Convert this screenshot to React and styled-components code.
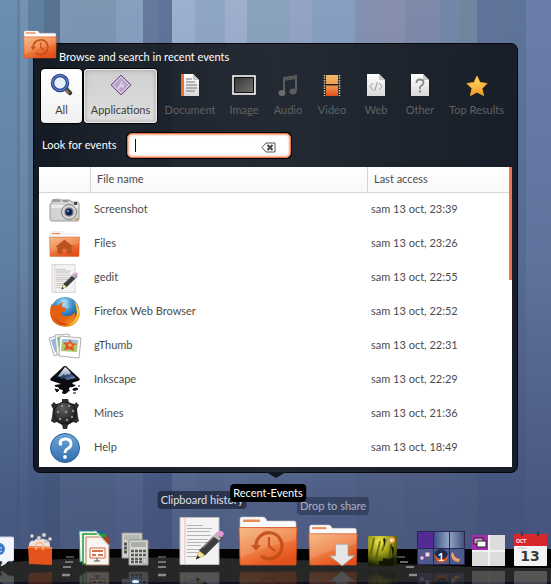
import * as React from "react";
import styled, { createGlobalStyle, ThemeProvider } from "styled-components";

const theme = {
  font: '"Lato", "Open Sans", sans-serif',
  textSize: "11px",
  colors: {
    accent: "#ee7646",
    text: "#4c4c4c",
    rule: "#d6d6d6",
    muted: "#5f6265",
    panelEdge: "#05070b",
  },
};

const stripes = [
  [0, 17, "#6a8fb0"],
  [17, 20, "#6481a2"],
  [20, 28, "#7592b2"],
  [28, 44, "#5f80a0"],
  [44, 60, "#577390"],
  [60, 74, "#7f97b6"],
  [74, 116, "#7d96b2"],
  [116, 143, "#899fc0"],
  [143, 158, "#68799e"],
  [158, 172, "#60739a"],
  [172, 195, "#9bb1cf"],
  [195, 225, "#90a7c4"],
  [225, 247, "#9eb0ce"],
  [247, 290, "#8ca3be"],
  [290, 312, "#93a4c4"],
  [312, 355, "#879fc0"],
  [355, 380, "#8292b0"],
  [380, 405, "#8790ac"],
  [405, 440, "#7d8aaa"],
  [440, 460, "#7288a8"],
  [460, 477, "#71869f"],
  [477, 500, "#62749c"],
  [500, 526, "#5f7499"],
  [526, 551, "#6a7ea9"],
];

const wallpaper = stripes
  .map(([from, to, color]) => {
    const stop = (x) => `${((x / 551) * 100).toFixed(2)}%`;
    return `${color} ${stop(from)}, ${color} ${stop(to)}`;
  })
  .join(", ");

const GlobalStyle = createGlobalStyle`
  * {
    box-sizing: border-box;
  }

  body {
    margin: 0;
    overflow-x: hidden;
    font-family: ${theme.font};
    font-size: ${theme.textSize};
    line-height: 16px;
    color: ${theme.colors.text};
  }

  button,
  input {
    font: inherit;
  }
`;

const Desktop = styled.main`
  display: flex;
  flex-direction: column;
  min-height: 100vh;
  overflow: hidden;
  background:
    linear-gradient(
      to bottom,
      rgba(62, 77, 118, 0) 0%,
      rgba(64, 80, 120, 0.25) 45%,
      rgba(62, 76, 118, 0.78) 85%,
      rgba(62, 76, 116, 0.85) 100%
    ),
    linear-gradient(to right, ${wallpaper});
`;

const Panel = styled.section`
  position: relative;
  margin: 43px 33px 0;
  padding: 5px 5px 5px;
  border: 1px solid ${(props) => props.theme.colors.panelEdge};
  border-radius: 7px;
  background: linear-gradient(
    to right,
    rgba(16, 21, 29, 0.94) 0%,
    rgba(24, 29, 36, 0.93) 25%,
    rgba(30, 36, 44, 0.95) 50%,
    rgba(20, 26, 35, 0.95) 100%
  );

  &::after {
    content: "";
    position: absolute;
    top: 100%;
    left: 50%;
    margin-left: -10px;
    border: 10px solid transparent;
    border-top: 6px solid #10141e;
    border-bottom: 0;
  }
`;

const PanelBadge = styled.div`
  position: absolute;
  top: -14px;
  left: -11px;
  line-height: 0;
`;

const PanelTitle = styled.h1`
  margin: 0 0 3px;
  padding-left: 20px;
  font-size: inherit;
  font-weight: 400;
  line-height: 16px;
  color: #fff;
`;

const Tabs = styled.nav`
  display: flex;
  align-items: stretch;
  height: 56px;
  margin-left: 1px;
`;

const tabLook = {
  plain: `
    background: none;
    color: ${theme.colors.muted};
  `,
  active: `
    background: linear-gradient(#ffffff, #f1f1f1);
    color: #3c3c3c;
    box-shadow: 0 0 0 1px #000;
  `,
  pressed: `
    background: linear-gradient(#cfcfcf, #dedede);
    color: #3c3c3c;
    box-shadow: 0 0 0 1px #000, inset 0 0 0 1px #ededed, inset 0 0 5px #8a8a8a;
  `,
};

const Tab = styled.button`
  display: flex;
  flex: 0 0 ${(props) => props.$width}px;
  flex-direction: column;
  align-items: center;
  gap: 5px;
  margin: 1px;
  padding: 4px 0 0;
  border: 0;
  border-radius: 4px;
  white-space: nowrap;
  cursor: pointer;
  ${(props) => tabLook[props.$look]}
`;

const SearchRow = styled.form`
  display: flex;
  align-items: center;
  gap: 10px;
  margin: 9px 0 9px 3px;
  color: #fff;
`;

const SearchLabel = styled.label`
  flex: 0 0 75px;
  padding-bottom: 2px;
  white-space: nowrap;
`;

const SearchBox = styled.div`
  display: flex;
  align-items: center;
  width: 164px;
  height: 25px;
  padding: 0 14px 0 7px;
  border: 1px solid ${(props) => props.theme.colors.accent};
  border-radius: 5px;
  background: #fff;
  box-shadow: 0 0 0 1px #000, inset 0 0 2px 1px #f3a583;
`;

const SearchInput = styled.input`
  flex: 1;
  min-width: 0;
  padding: 0;
  border: 0;
  outline: 0;
  background: none;
  color: #222;
`;

const Caret = styled.i`
  width: 1px;
  height: 13px;
  background: #111;
`;

const ClearButton = styled.button`
  padding: 3px 0 0;
  border: 0;
  background: none;
  line-height: 0;
  cursor: pointer;
`;

const ListBox = styled.div`
  display: flex;
  align-items: flex-start;
  min-height: 300px;
  background: #fff;
`;

const EventTable = styled.table`
  flex: 1;
  border-collapse: separate;
  border-spacing: 0;
  table-layout: fixed;
  width: 100%;
`;

const HeadCell = styled.th`
  width: ${(props) => props.$width};
  height: 26px;
  padding: 0 0 1px 6px;
  border-bottom: 1px solid ${(props) => props.theme.colors.rule};
  border-left: ${(props) =>
    props.$divided ? `1px solid ${props.theme.colors.rule}` : "0"};
  background: linear-gradient(#fff, #f8f8f8);
  font-weight: 400;
  text-align: left;
`;

const Cell = styled.td`
  height: 34px;
  padding: 0 0 2px 4px;
`;

const IconCell = styled(Cell)`
  padding: 0;
  text-align: center;
  line-height: 0;
`;

const ScrollThumb = styled.div`
  flex: 0 0 3px;
  height: 113px;
  background: ${(props) => props.theme.colors.accent};
`;

const Dock = styled.footer`
  position: relative;
  display: flex;
  align-items: flex-end;
  justify-content: center;
  height: 100px;
  margin-top: auto;
  padding-right: 21px;
`;

const DockFloor = styled.svg`
  position: absolute;
  left: 0;
  bottom: 0;
  width: 100%;
  height: 35px;
`;

const DockSlot = styled.div`
  position: relative;
  display: flex;
  flex: 0 0 ${(props) => props.$width}px;
  flex-direction: column;
  align-items: center;
  min-width: 0;
  line-height: 0;
`;

const DockDivider = styled(DockSlot)`
  padding-bottom: 7px;
`;

const DockButton = styled.button`
  flex: none;
  padding: 0;
  border: 0;
  background: none;
  line-height: 0;
`;

const Reflection = styled.div`
  height: 18px;
  padding-top: 5px;
  overflow: hidden;
  opacity: 0.22;

  svg {
    transform: scaleY(-1);
  }
`;

const RunningLight = styled.div`
  position: absolute;
  bottom: 1px;
  width: 7px;
  height: 3px;
  border-radius: 50%;
  background: #e8f4ff;
  box-shadow: 0 0 4px 1px #3f77b8;
`;

const DockLabel = styled.span`
  position: absolute;
  bottom: ${(props) => props.$bottom}px;
  left: 50%;
  z-index: ${(props) => (props.$strong ? 2 : 1)};
  padding: 1px 3px;
  border-radius: 4px;
  background: ${(props) => (props.$strong ? "#000" : "rgba(22, 27, 45, 0.8)")};
  line-height: 16px;
  white-space: nowrap;
  color: #fff;
  opacity: ${(props) => props.$opacity};
  transform: translateX(-50%);
`;

const Icon = ({ w, h, box, children }) => (
  <svg width={w} height={h} viewBox={box || `0 0 ${w} ${h}`} aria-hidden="true">
    {children}
  </svg>
);

const HiddenSvg = styled.svg`
  position: absolute;
`;

const SharedPaint = () => (
  <HiddenSvg width="0" height="0" aria-hidden="true">
    <defs>
      <linearGradient id="orange" x1="0" y1="0" x2="0.6" y2="1">
        <stop offset="0" stopColor="#f6b27a" />
        <stop offset="0.45" stopColor="#f08a4c" />
        <stop offset="1" stopColor="#e5501a" />
      </linearGradient>
      <linearGradient id="paper" x1="0" y1="0" x2="0" y2="1">
        <stop offset="0" stopColor="#ffffff" />
        <stop offset="1" stopColor="#d9d9d9" />
      </linearGradient>
      <linearGradient id="film" x1="0" y1="0" x2="0" y2="1">
        <stop offset="0" stopColor="#f0b968" />
        <stop offset="0.5" stopColor="#f09a50" />
        <stop offset="1" stopColor="#e2501a" />
      </linearGradient>
      <linearGradient id="dark" x1="0" y1="0" x2="1" y2="1">
        <stop offset="0" stopColor="#323232" />
        <stop offset="1" stopColor="#767676" />
      </linearGradient>
      <linearGradient id="gold" x1="0" y1="0" x2="0" y2="1">
        <stop offset="0" stopColor="#ffe27a" />
        <stop offset="1" stopColor="#f79a1c" />
      </linearGradient>
      <linearGradient id="help" x1="0" y1="0" x2="0" y2="1">
        <stop offset="0" stopColor="#6fa6d8" />
        <stop offset="1" stopColor="#2f6fae" />
      </linearGradient>
      <linearGradient id="ink" x1="0" y1="0" x2="1" y2="1">
        <stop offset="0.3" stopColor="#0a0c12" />
        <stop offset="0.65" stopColor="#35507e" />
        <stop offset="1" stopColor="#8fa9d0" />
      </linearGradient>
      <linearGradient id="inkTip" x1="0" y1="0" x2="0" y2="1">
        <stop offset="0" stopColor="#f4f7fb" />
        <stop offset="1" stopColor="#7f93b4" />
      </linearGradient>
      <linearGradient id="fox" x1="0" y1="0" x2="1" y2="1">
        <stop offset="0" stopColor="#e35d12" />
        <stop offset="0.6" stopColor="#e4620f" />
        <stop offset="1" stopColor="#fbc02e" />
      </linearGradient>
      <linearGradient id="wall" x1="0" y1="0" x2="1" y2="0">
        <stop offset="0" stopColor="#3c5184" />
        <stop offset="0.5" stopColor="#93a6c6" />
        <stop offset="1" stopColor="#43507f" />
      </linearGradient>
      <radialGradient id="globe" cx="0.45" cy="0.2" r="0.8">
        <stop offset="0" stopColor="#9bd6f6" />
        <stop offset="0.5" stopColor="#2f7fc0" />
        <stop offset="1" stopColor="#123a78" />
      </radialGradient>
      <radialGradient id="iron" cx="0.4" cy="0.3" r="0.7">
        <stop offset="0" stopColor="#5d605c" />
        <stop offset="1" stopColor="#1b1d1b" />
      </radialGradient>
      <radialGradient id="forest" cx="0.4" cy="0.2" r="0.8">
        <stop offset="0" stopColor="#f3ec4e" />
        <stop offset="0.5" stopColor="#9a9a18" />
        <stop offset="1" stopColor="#1c2206" />
      </radialGradient>
    </defs>
  </HiddenSvg>
);

const Folder = ({ w, h, emblem }) => (
  <Icon w={w} h={h} box="0 0 60 50">
    <path d="M2 14V3q0-2 2-2h21q2 0 3 2l1 2h27q2 0 2 2v8z" fill="#fbfbfb" stroke="#c9c4bf" strokeWidth="0.6" />
    <path d="M5 3.500h17v2.500H5z" fill="#ef8a58" />
    <path d="M1 11.500h58L58 48q0 1-1 1H3q-1 0-1-1z" fill="url(#orange)" stroke="#d2501f" strokeWidth="0.8" />
    <path d="M2 12.500h56L57.500 24Q28 30 2.500 42z" fill="#fff" opacity="0.13" />
    {emblem === "clock" && (
      <g fill="none" stroke="#bf4a14" strokeWidth="3.200" opacity="0.85">
        <path d="M18 30A13 13 0 1 1 23 40" />
        <path d="M31 21v9l6 5" strokeWidth="2.200" />
        <path d="M13 29h10l-5 6z" fill="#bf4a14" stroke="none" />
      </g>
    )}
    {emblem === "home" && (
      <path d="M30 17l18 14h-4v13H34V34h-8v10H16V31h-4z" fill="#b9521f" />
    )}
    {emblem === "drop" && (
      <path d="M33 24h15v14h8L41 50 26 38h7z" fill="#e6e6e6" stroke="#a5a5a5" />
    )}
  </Icon>
);

const Notepad = ({ w, h }) => (
  <Icon w={w} h={h} box="0 0 46 49">
    <path d="M1 1h39v47H1z" fill="#f3f3f3" stroke="#bdbdbd" />
    <path d="M6 1v47" stroke="#f1b9b9" />
    <path d="M8 9h16M8 12h25M8 15h23M8 19h24M8 23h21M8 26h23M8 29h14M8 33h17M8 36h12M8 40h14" stroke="#b4b4b4" strokeWidth="1.200" />
    <path d="M17 43l3-9 18-18 6 5-18 18z" fill="#3d3d3d" />
    <path d="M24 31L37 18" stroke="#808080" strokeWidth="1.500" />
    <path d="M17 43l3-9 6 5z" fill="#f0e08a" />
    <path d="M17 43l1.500-4 2.500 2z" fill="#222" />
    <path d="M36 18l3-3q4-2 6 2l-2 4z" fill="#e79ad0" />
    <path d="M34 20l6 4 2-2-5-5z" fill="#bbb" />
  </Icon>
);

const FileSheet = ({ children }) => (
  <Icon w={18} h={24}>
    <path d="M0 1h12l6 6v16H0z" fill="url(#paper)" />
    <path d="M12 1v6h6z" fill="#c8c8c8" />
    {children}
  </Icon>
);

const tabIcons = {
  all: (
    <Icon w={24} h={24}>
      <path d="M15 15l5 5" stroke="#3c3c3c" strokeWidth="4.500" strokeLinecap="round" />
      <path d="M15 16l4 4" stroke="#a58b50" strokeWidth="1.500" />
      <circle cx="10" cy="10" r="7.500" fill="#e8effa" stroke="#27448f" strokeWidth="3.500" />
      <circle cx="10" cy="10" r="7.500" fill="none" stroke="#7f9bdc" strokeWidth="0.900" />
    </Icon>
  ),
  applications: (
    <Icon w={24} h={24}>
      <path d="M12 2l10 10-10 10L2 12z" fill="#baa3cb" stroke="#6f5683" />
      <path d="M12 4l8 8-8 8-8-8z" fill="none" stroke="#e2d6ea" />
      <path d="M8 15l3-4 1-3 2 1-1 2 3 1-2 3-3-1-1 3z" fill="#d9cbe2" />
    </Icon>
  ),
  document: (
    <FileSheet>
      <path d="M0 1h3v22H0z" fill="#ee7030" />
      <path d="M5 6h6M5 9h9M5 12h11M5 15h11M5 18h9" stroke="#777" />
    </FileSheet>
  ),
  image: (
    <Icon w={24} h={24}>
      <path d="M1 3h22v18H1z" fill="url(#dark)" stroke="#fff" strokeWidth="1.500" />
      <path d="M2.500 4.500h19v15h-19z" fill="none" stroke="#111" />
    </Icon>
  ),
  audio: (
    <Icon w={20} h={24}>
      <path d="M6 20V5l12-2v15" fill="none" stroke="#626262" strokeWidth="1.800" />
      <path d="M6 5l12-2v3L6 8z" fill="#565656" />
      <ellipse cx="4" cy="20" rx="3.500" ry="3" fill="#6c6c6c" />
      <ellipse cx="15" cy="18.500" rx="3.500" ry="3" fill="#5c5c5c" />
    </Icon>
  ),
  video: (
    <Icon w={18} h={24}>
      <path d="M0 2h18v21H0z" fill="#22201e" />
      <path d="M1.500 2v21M16.500 2v21" stroke="#c8c8c8" strokeWidth="1.500" strokeDasharray="1.500 1" />
      <path d="M3 2h12v9H3zM3 12.500h12V23H3z" fill="url(#film)" />
    </Icon>
  ),
  web: (
    <FileSheet>
      <path d="M6 10l-3 3.500L6 17M12 10l3 3.500-3 3.500M10.500 9l-3 9" fill="none" stroke="#999" />
    </FileSheet>
  ),
  other: (
    <FileSheet>
      <path d="M5.500 10q0-3.500 3.500-3.500t3.500 3q0 1.700-2 3t-1.500 3.500" fill="none" stroke="#8a8a8a" strokeWidth="1.800" />
      <circle cx="9" cy="18.500" r="1.200" fill="#8a8a8a" />
    </FileSheet>
  ),
  star: (
    <Icon w={24} h={24}>
      <path d="M12 3l3 6.500 7 1-5 5 1.500 7L12 19l-6.500 3.500 1.500-7-5-5 7-1z" fill="url(#gold)" stroke="#f5a623" strokeLinejoin="round" />
    </Icon>
  ),
};

const appIcons = {
  camera: (
    <Icon w={31} h={25}>
      <path d="M3 5V2q6-2 9 0h9l2 2h6q1 1 1 2v15q0 2-2 2H3q-2 0-2-2V7q0-2 2-2z" fill="#d3d3d3" stroke="#9a9a9a" />
      <path d="M2 7h27v3H2z" fill="#ececec" />
      <path d="M4 3h7M14 3h5" stroke="#666" />
      <circle cx="20" cy="14" r="7.500" fill="#d8d8d8" stroke="#808080" />
      <circle cx="20" cy="14" r="5" fill="#6a6d73" stroke="#c8c8c8" />
      <circle cx="20" cy="14" r="3.200" fill="#0d214f" />
      <circle cx="19" cy="13" r="1.200" fill="#5f8fda" />
      <path d="M25 4h3v3h-3z" fill="#444" />
      <path d="M26 20h3v2h-3z" fill="#f0a020" />
    </Icon>
  ),
  files: <Folder w={31} h={26} emblem="home" />,
  gedit: <Notepad w={28} h={29} />,
  firefox: (
    <Icon w={32} h={32}>
      <circle cx="16" cy="15" r="14" fill="url(#globe)" />
      <path d="M12 4q4-2 8 1-3 2-2 4 3 1 2 3l-4 1-4-4z" fill="#b9e0f5" opacity="0.5" />
      <path d="M3 7q0 3 1 4 2-3 6-2 2-3 5-3-3 2-2 5l4 1-1 3-4 2q2 4 7 3 5-1 7-4 1 4-2 7 6-5 4-14 4 6 2 13-4 9-14 9Q2 29 1 17q0-6 2-10z" fill="url(#fox)" />
      <path d="M25 5q6 6 5 13-1 8-9 11 6-5 7-11 0-7-3-13z" fill="#fbc93a" />
      <path d="M4 19q5 9 15 9-9 4-15-9z" fill="#c73a0c" />
    </Icon>
  ),
  gthumb: (
    <Icon w={34} h={28}>
      <path d="M1 6l10-3 4 18-9 3z" fill="#f8f8f8" stroke="#b5b5b5" />
      <path d="M3 8l6-2 3 12-5 2z" fill="#8fb6e0" />
      <path d="M7 3l14-1 2 19-14 2z" fill="#f8f8f8" stroke="#b5b5b5" />
      <path d="M9 5l10-1 1 13-9 2z" fill="#8fb878" />
      <path d="M12 4l21 2-2 20-20-2z" fill="#fff" stroke="#b0b0b0" />
      <path d="M14 7l16 1-1 12-16-1z" fill="#a9c86a" />
      <path d="M14 7l16 1v3l-16-1z" fill="#9cc4ea" />
      <path d="M22 7l2 4 5 1-4 2 1 5-5-2-5 1 2-4-3-4 5 1z" fill="#e5532d" />
      <circle cx="22" cy="13" r="1.800" fill="#f7b050" />
    </Icon>
  ),
  inkscape: (
    <Icon w={32} h={32}>
      <path d="M16 2q2 0 3 2l11 10q2 2-1 3-4 1-6 2 1 2 4 2-3 3-6 2-2 2 0 4-2 0-3 2-3 2-5 0l1-3q-4 0-5-3-4 0-3-2l6-1-9-3q-3-1-1-3L13 4q1-2 3-2z" fill="#090b10" />
      <path d="M16 4l11 10-9 2-3-2-2 1-3-2-4 1z" fill="url(#ink)" />
      <path d="M16 3q2 1 6 6l-2 2-2-1-2 2-1-2-2 2-3 1-1-1z" fill="url(#inkTip)" />
      <path d="M6 25l4 1-2 2zM24 25q4-2 5 0-2 2-5 1zM24 29h3M29 22h2" fill="#090b10" stroke="#090b10" />
    </Icon>
  ),
  mines: (
    <Icon w={32} h={34}>
      <path d="M13 2h6l1 4 6 1 1-2 3 3-2 4 1 8 1 4-3 2-3-1-5 3-1 4h-4l-1-4-5-3-3 1-3-2 1-4 1-8-2-4 3-3 2 2 6-1z" fill="#2d2f2d" />
      <circle cx="16" cy="16" r="11" fill="url(#iron)" stroke="#161816" />
      <g fill="#8d908c">
        <circle cx="13" cy="9" r="1.200" />
        <circle cx="20" cy="9" r="1.200" />
        <circle cx="9" cy="15" r="1.200" />
        <circle cx="17" cy="15" r="1.200" />
        <circle cx="24" cy="14" r="1.200" />
        <circle cx="11" cy="22" r="1.200" />
        <circle cx="18" cy="23" r="1.200" />
        <circle cx="23" cy="20" r="1.200" />
      </g>
    </Icon>
  ),
  help: (
    <Icon w={32} h={32}>
      <circle cx="16" cy="16" r="14.500" fill="url(#help)" stroke="#2c629a" />
      <path d="M11 12q0-5 5.500-5t5.500 5q0 3-3 4.500t-3 4.500" fill="none" stroke="#fff" strokeWidth="2.800" />
      <circle cx="11.500" cy="12" r="1.800" fill="#fff" />
      <circle cx="16" cy="25" r="1.900" fill="#fff" />
    </Icon>
  ),
};

const Chat = () => (
  <Icon w={24} h={30}>
    <path d="M2 1h20q2 0 2 2v20q0 2-2 2h-4q-2 3-7 5 2-3 1-5H2z" fill="#f2f6fc" stroke="#c8d4e4" />
    <circle cx="9" cy="13" r="6" fill="#3d78c8" />
    <path d="M5 12h7M7 15q3 2 5 0" stroke="#cfe2fa" fill="none" />
  </Icon>
);

const ShoppingBag = () => (
  <Icon w={28} h={34}>
    <path d="M3 12q2-5 5-3 3-4 6-1 4-3 6 1 4-1 4 5v3H3z" fill="#e8e3de" />
    <g fill="#e4dcd8" stroke="#a99a98" strokeWidth="0.600">
      <circle cx="6" cy="4" r="1.700" />
      <circle cx="13" cy="6" r="1.900" />
      <circle cx="18" cy="3" r="1.900" />
      <circle cx="24" cy="7" r="1.700" />
      <circle cx="20" cy="9" r="1.500" />
    </g>
    <path d="M2 14l24 1v18l-23-1z" fill="#e5531c" />
    <path d="M2 14l24 1v2L2 16z" fill="#f5864e" />
    <path d="M10 18v-5q0-2 2-2h3q2 0 2 2v5" fill="none" stroke="#ffb488" strokeWidth="1.400" />
  </Icon>
);

const Documents = () => (
  <Icon w={32} h={36}>
    <path d="M1 1h20l4 4v24L2 32z" fill="#f1f8f8" stroke="#3b7f8e" />
    <path d="M17 1h8v8z" fill="#1d66a8" />
    <path d="M5 4h17l5 5v25H5z" fill="#f5faf2" stroke="#219a22" strokeWidth="1.500" />
    <path d="M19 4h9v9z" fill="#25a022" />
    <path d="M8 7h15l8 8v20H8z" fill="#f8f4ef" stroke="#b07a60" />
    <path d="M22 7h9v9z" fill="#a2441c" />
    <path d="M17 1l14 15" stroke="#cddbe8" strokeWidth="1.500" />
    <path d="M12 18h15v10H12z" fill="#fff" stroke="#d06a40" />
    <path d="M14 20h11v2H14zM14 24h4v2h-4zM20 24h5v2h-5z" fill="#dc7148" />
    <path d="M19 28v3M16 31h6" stroke="#555" />
  </Icon>
);

const Calculators = () => (
  <Icon w={28} h={34}>
    <path d="M1 1h20v25H1z" fill="#d2d2cf" stroke="#989894" />
    <path d="M3 3h16v5H3z" fill="#b3b8b0" />
    <path d="M3 12h4M3 16h4M3 20h4" stroke="#555" strokeWidth="3" strokeDasharray="3 1" />
    <path d="M8 8h19v25H8z" fill="#d8d8d5" stroke="#92928e" />
    <path d="M10 10h15v5H10z" fill="#aab0a6" />
    <path d="M10 19h15M10 23h15M10 27h11M10 30h11" stroke="#585858" strokeWidth="2.500" strokeDasharray="3 1" />
    <path d="M22 26h3v6h-3z" fill="#c8d8e0" stroke="#777" strokeWidth="0.500" />
  </Icon>
);

const Forest = () => (
  <Icon w={29} h={30}>
    <path d="M0 0h29v30H0z" fill="url(#forest)" />
    <path d="M6 2l-3 16M12 5l-4 18M18 3l-4 12M23 8l-2 16" stroke="#4b5208" strokeWidth="2" opacity="0.7" />
    <path d="M11 30v-5h4v-3l6 1 5-2v9zM15 3l2-1v9zM23 9l3 3-1 10z" fill="#141706" />
    <circle cx="24" cy="4" r="3" fill="#f5a555" />
    <path d="M22 3l4 1-3 2z" fill="#fff" />
  </Icon>
);

const Workspaces = ({ flat }) => (
  <Icon w={48} h={36}>
    <path d="M0 1h48v34H0z" fill="#29264f" />
    <path d="M1 2h15v16H1z" fill="#542a94" />
    <path d="M17 2h15v16H17zM33 2h14v16H33z" fill="url(#wall)" />
    <path d="M1 19h15v15H1zM17 19h15v15H17zM33 19h14v15H33z" fill="#4c5a8c" />
    <path d="M3 26h4v4H3zM8 22h5v5H8z" fill="#ddd" stroke="#7c3a90" />
    <circle cx="24" cy="26" r="7" fill="#1d2d50" />
    <path d="M17 23q0 10 8 10 7-1 6-9-2 6-7 5-5-1-7-6z" fill="#d75b1c" />
    <path d="M36 22q1 7 7 7l-1 3q-8-1-8-8z" fill="#f5a060" />
    {!flat && (
      <text x="24" y="31" fontSize="11" fontWeight="700" fill="#fff" textAnchor="middle">1</text>
    )}
  </Icon>
);

const Switcher = () => (
  <Icon w={33} h={31}>
    <path d="M0 0h33v31H0z" fill="#dcdcdc" />
    <path d="M17 0v31M0 16h33" stroke="#f8f8f8" strokeWidth="1.500" />
    <path d="M0 0h16v15H0z" fill="#a42cae" />
    <path d="M2 3h9v6H2z" fill="#d9a0de" stroke="#222" />
    <path d="M5 6h9v6H5z" fill="#fff" stroke="#222" />
  </Icon>
);

const Calendar = ({ flat }) => (
  <Icon w={33} h={34}>
    <path d="M0 3h33v30q0 1-1 1H1q-1 0-1-1z" fill="#f3f3f3" />
    <path d="M1 2h31q1 0 1 1v11H0V3q0-1 1-1z" fill="#d8282c" />
    <path d="M8 0v4M24 0v4" stroke="#333a58" strokeWidth="2" />
    <path d="M4 16h9" stroke="#c5c5c5" />
    {!flat && (
      <>
        <text x="2" y="11" fontSize="5" fontWeight="700" fill="#fff">OCT</text>
        <text x="16" y="29" fontSize="14" fontFamily="DejaVu Sans" fontWeight="700" fill="#3a3a3a" textAnchor="middle">13</text>
      </>
    )}
  </Icon>
);

const Divider = ({ lean }) => (
  <Icon w={22} h={21}>
    <g stroke="#8b8b8b" strokeWidth="1">
      <path d={`M${7 + lean * 2} 1h8`} />
      <path d={`M${7 + lean} 6h8`} strokeWidth="1.500" />
      <path d={`M${7 - lean} 11h8`} strokeWidth="1.800" />
      <path d={`M${7 - lean * 2} 19h8`} strokeWidth="2.500" />
    </g>
  </Icon>
);

const tabs = [
  { label: "All", icon: "all", width: 41, look: "active" },
  { label: "Applications", icon: "applications", width: 73, look: "pressed" },
  { label: "Document", icon: "document", width: 62 },
  { label: "Image", icon: "image", width: 42 },
  { label: "Audio", icon: "audio", width: 42 },
  { label: "Video", icon: "video", width: 42 },
  { label: "Web", icon: "web", width: 42 },
  { label: "Other", icon: "other", width: 42 },
  { label: "Top Results", icon: "star", width: 67 },
];

const events = [
  { name: "Screenshot", icon: "camera", date: "sam 13 oct, 23:39" },
  { name: "Files", icon: "files", date: "sam 13 oct, 23:26" },
  { name: "gedit", icon: "gedit", date: "sam 13 oct, 22:55" },
  { name: "Firefox Web Browser", icon: "firefox", date: "sam 13 oct, 22:52" },
  { name: "gThumb", icon: "gthumb", date: "sam 13 oct, 22:31" },
  { name: "Inkscape", icon: "inkscape", date: "sam 13 oct, 22:29" },
  { name: "Mines", icon: "mines", date: "sam 13 oct, 21:36" },
  { name: "Help", icon: "help", date: "sam 13 oct, 18:49" },
];

const dockItems = [
  { key: "chat", width: 38, Art: Chat },
  { key: "bag", width: 38, Art: ShoppingBag },
  { key: "divider-left", width: 18, Art: Divider, art: { lean: 1 }, divider: true },
  { key: "documents", width: 34, Art: Documents },
  { key: "calculators", width: 48, Art: Calculators, running: true },
  { key: "divider-mid", width: 6, Art: Divider, art: { lean: 0 }, divider: true },
  {
    key: "clipboard",
    width: 74,
    Art: Notepad,
    art: { w: 46, h: 50 },
    label: { text: "Clipboard history", bottom: 75, opacity: 0.8 },
  },
  {
    key: "recent",
    width: 58,
    Art: Folder,
    art: { w: 60, h: 50, emblem: "clock" },
    label: { text: "Recent-Events", bottom: 82, opacity: 1, strong: true },
  },
  {
    key: "share",
    width: 72,
    Art: Folder,
    art: { w: 50, h: 42, emblem: "drop" },
    label: { text: "Drop to share", bottom: 69, opacity: 0.5 },
  },
  { key: "forest", width: 26, Art: Forest },
  { key: "divider-right", width: 24, Art: Divider, art: { lean: -3 }, divider: true },
  { key: "workspaces", width: 44, Art: Workspaces, hasText: true },
  { key: "switcher", width: 50, Art: Switcher },
  { key: "calendar", width: 34, Art: Calendar, hasText: true },
];

const DockItem = ({ item }) => {
  const { Art, art, label, divider, running, hasText, width } = item;

  if (divider) {
    return (
      <DockDivider $width={width}>
        <Art {...art} />
      </DockDivider>
    );
  }

  return (
    <DockSlot $width={width}>
      {label && (
        <DockLabel
          $bottom={label.bottom}
          $opacity={label.opacity}
          $strong={label.strong}
        >
          {label.text}
        </DockLabel>
      )}
      <DockButton type="button" aria-label={label ? label.text : item.key}>
        <Art {...art} />
      </DockButton>
      <Reflection aria-hidden="true">
        <Art {...art} {...(hasText ? { flat: true } : {})} />
      </Reflection>
      {running && <RunningLight />}
    </DockSlot>
  );
};

const EventPanel = () => {
  const [query, setQuery] = React.useState("");

  return (
    <Panel>
      <PanelBadge>
        <Folder w={34} h={29} emblem="clock" />
      </PanelBadge>
      <PanelTitle>Browse and search in recent events</PanelTitle>
      <Tabs>
        {tabs.map((tab) => (
          <Tab key={tab.label} type="button" $width={tab.width} $look={tab.look || "plain"}>
            {tabIcons[tab.icon]}
            {tab.label}
          </Tab>
        ))}
      </Tabs>
      <SearchRow onSubmit={(e) => e.preventDefault()}>
        <SearchLabel htmlFor="search">Look for events</SearchLabel>
        <SearchBox>
          {!query && <Caret />}
          <SearchInput
            id="search"
            type="text"
            value={query}
            onChange={(e) => setQuery(e.target.value)}
          />
          <ClearButton type="button" aria-label="Clear" onClick={() => setQuery("")}>
            <Icon w={15} h={11}>
              <path d="M5 1h9v9H5L1 5.500z" fill="#fff" stroke="#555" />
              <path d="M6.500 3l5 5M11.500 3l-5 5" stroke="#444" strokeWidth="2" />
            </Icon>
          </ClearButton>
        </SearchBox>
      </SearchRow>
      <ListBox>
        <EventTable>
          <thead>
            <tr>
              <HeadCell $width="51px" aria-label="Icon" />
              <HeadCell $divided>File name</HeadCell>
              <HeadCell $width="142px" $divided>
                Last access
              </HeadCell>
            </tr>
          </thead>
          <tbody>
            {events.map((event) => (
              <tr key={event.name}>
                <IconCell>{appIcons[event.icon]}</IconCell>
                <Cell>{event.name}</Cell>
                <Cell>{event.date}</Cell>
              </tr>
            ))}
          </tbody>
        </EventTable>
        <ScrollThumb />
      </ListBox>
    </Panel>
  );
};

const App = () => (
  <ThemeProvider theme={theme}>
    <GlobalStyle />
    <SharedPaint />
    <Desktop>
      <EventPanel />
      <Dock>
        <DockFloor viewBox="0 0 551 35" preserveAspectRatio="none" aria-hidden="true">
          <path d="M0 0h551v35H0z" fill="#030303" />
          <path d="M0 14Q80 7 200 9T400 15T551 19V35H0z" fill="#272727" />
          <path d="M0 33h551v2H0z" fill="#10111c" />
        </DockFloor>
        {dockItems.map((item) => (
          <DockItem key={item.key} item={item} />
        ))}
      </Dock>
    </Desktop>
  </ThemeProvider>
);

export default App;
